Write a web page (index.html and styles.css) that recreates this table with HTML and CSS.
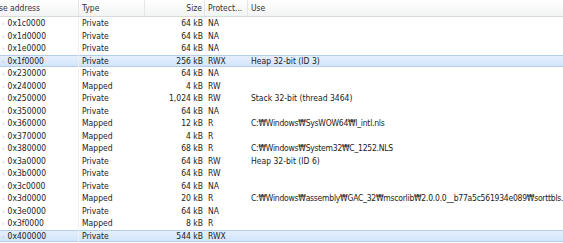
FILE: index.html
```html
<!DOCTYPE html>
<html lang="en">
<head>
  <meta charset="UTF-8" />
  <title>Memory</title>
  <link rel="stylesheet" href="styles.css">
</head>
<body>
  <div class="grid">
    <div class="row head">
      <div class="c addr">Base address</div>
      <div class="c type">Type</div>
      <div class="c size">Size</div>
      <div class="c prot">Protect...</div>
      <div class="c use">Use</div>
    </div>
    <div id="rows"></div>
  </div>

  <script>
    const data = [
      ["0x1c0000", "Private", "64", "NA", ""],
      ["0x1d0000", "Private", "64", "NA", ""],
      ["0x1e0000", "Private", "64", "NA", ""],
      ["0x1f0000", "Private", "256", "RWX", "Heap 32-bit (ID 3)", true],
      ["0x230000", "Private", "64", "NA", ""],
      ["0x240000", "Mapped", "4", "RW", ""],
      ["0x250000", "Private", "1,024", "RW", "Stack 32-bit (thread 3464)"],
      ["0x350000", "Private", "64", "NA", ""],
      ["0x360000", "Mapped", "12", "R", "C:\u20a9Windows\u20a9SysWOW64\u20a9l_intl.nls"],
      ["0x370000", "Mapped", "4", "R", ""],
      ["0x380000", "Mapped", "68", "R", "C:\u20a9Windows\u20a9System32\u20a9C_1252.NLS"],
      ["0x3a0000", "Private", "64", "RW", "Heap 32-bit (ID 6)"],
      ["0x3b0000", "Private", "64", "RW", ""],
      ["0x3c0000", "Private", "64", "NA", ""],
      ["0x3d0000", "Mapped", "20", "R", "C:\u20a9Windows\u20a9assembly\u20a9GAC_32\u20a9mscorlib\u20a92.0.0.0__b77a5c561934e089\u20a9sorttbls."],
      ["0x3e0000", "Private", "64", "NA", ""],
      ["0x3f0000", "Mapped", "8", "R", ""],
      ["0x400000", "Private", "544", "RWX", "", true]
    ];

    let html = "";
    for (const d of data) {
      const path = d[4].startsWith("C:") ? " path" : "";
      html += `<div class="row${d[5] ? " sel" : ""}">
        <div class="c addr"><span class="arrow">&#8250;</span>${d[0]}</div>
        <div class="c type">${d[1]}</div>
        <div class="c size">${d[2]} kB</div>
        <div class="c prot">${d[3]}</div>
        <div class="c use${path}">${d[4]}</div>
      </div>`;
    }
    document.getElementById("rows").innerHTML = html;
  </script>
</body>
</html>
```

FILE: styles.css
```css
* {
  box-sizing: border-box;
}
body {
  margin: 0;
  background: #fff;
  font-family: "DejaVu Sans Condensed", "DejaVu Sans", sans-serif;
  font-size: 8.5px;
  color: #222;
  overflow: hidden;
}
.grid {
  width: 563px;
  overflow: hidden;
}
.row {
  display: grid;
  grid-template-columns: 79px 66px 60px 43px 1fr;
  height: 12.5px;
  line-height: 12.5px;
  white-space: nowrap;
}
.c {
  overflow: hidden;
  padding-left: 3px;
}
.c.addr {
  padding-left: 2px;
  border-right: 1px solid #f0f0f0;
}
.arrow {
  color: #bbb;
  font-size: 7px;
  margin-right: 3px;
}
.c.size {
  text-align: right;
  padding-right: 2px;
}
.c.use {
  overflow: visible;
}
.c.path {
  letter-spacing: -0.23px;
}

.head {
  height: 17px;
  line-height: 16px;
  background: linear-gradient(#ffffff, #f2f3f4);
  border-bottom: 1px solid #dadada;
  color: #333;
}
.head .c {
  border-right: 1px solid #e6e6e6;
}
.head .c.addr {
  text-indent: -13px;
}
.head .c.use {
  border-right: none;
}

.sel {
  background: linear-gradient(#e6f0fd, #d2e4fb);
  box-shadow: inset 0 1px 0 #b4cdea, inset 0 -1px 0 #b4cdea;
}
```
